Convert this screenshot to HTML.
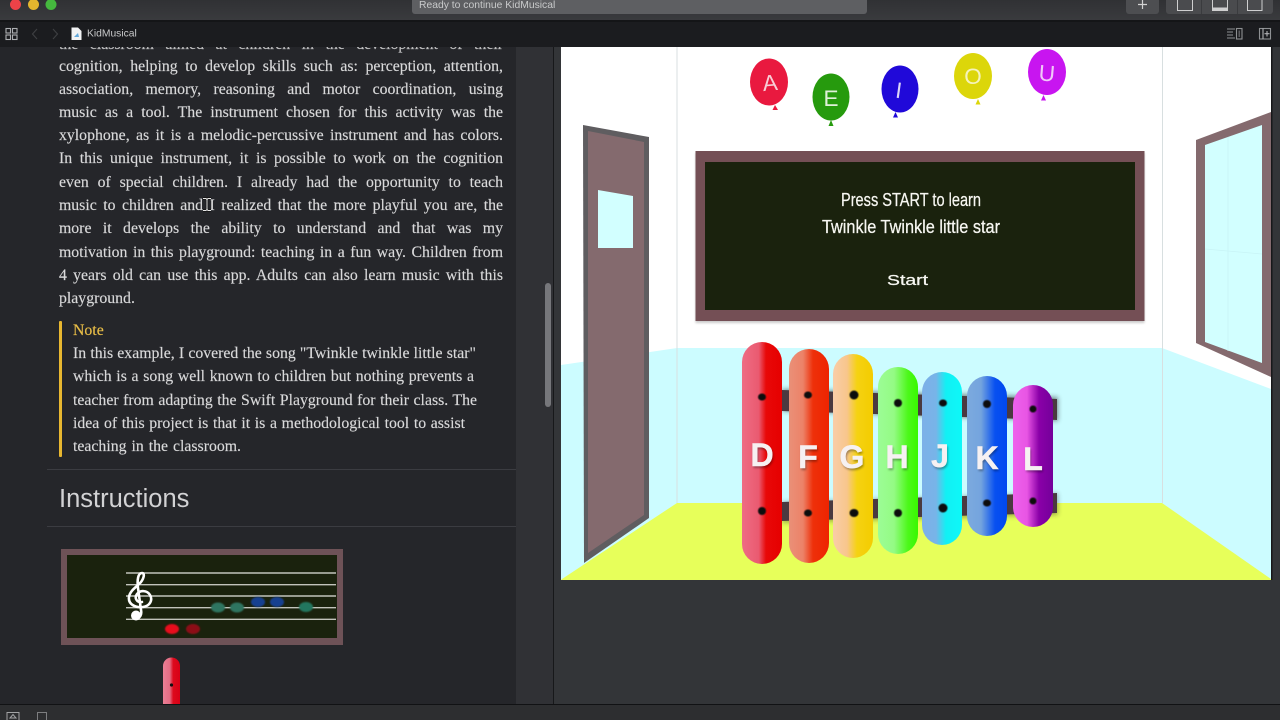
<!DOCTYPE html>
<html><head><meta charset="utf-8"><style>
html,body{margin:0;padding:0;width:1280px;height:720px;overflow:hidden;background:#25262a}
#clip{position:absolute;left:0;top:47px;width:516px;height:657px;overflow:hidden}
.l{position:absolute;font:15.8px/20px "Liberation Serif",serif;color:#d9d9da;-webkit-text-stroke:.15px #d9d9da;white-space:nowrap;text-align:justify;text-align-last:justify}
.w{left:59px;width:444px}
.n{left:73px}
.t{position:absolute;font-family:"Liberation Sans",sans-serif;white-space:nowrap}
svg{position:absolute;left:0;top:0}
</style></head><body>
<svg width="1280" height="720" viewBox="0 0 1280 720">
<defs>
<linearGradient id="tb" x1="0" y1="0" x2="0" y2="1"><stop offset="0" stop-color="#303134"/><stop offset="1" stop-color="#3a3b3e"/></linearGradient>
<linearGradient id="gD"><stop offset="0" stop-color="#ee6c84"/><stop offset=".42" stop-color="#ea5a70"/><stop offset=".6" stop-color="#e80808"/><stop offset="1" stop-color="#e60000"/></linearGradient>
<linearGradient id="gF"><stop offset="0" stop-color="#ea9078"/><stop offset=".35" stop-color="#ec8268"/><stop offset=".6" stop-color="#ee300a"/><stop offset="1" stop-color="#ee2400"/></linearGradient>
<linearGradient id="gG"><stop offset="0" stop-color="#f9cda8"/><stop offset=".35" stop-color="#f8c68c"/><stop offset=".6" stop-color="#f5d212"/><stop offset="1" stop-color="#f4cc00"/></linearGradient>
<linearGradient id="gH"><stop offset="0" stop-color="#9cfc96"/><stop offset=".4" stop-color="#94fb84"/><stop offset=".75" stop-color="#4cf81a"/><stop offset="1" stop-color="#38f800"/></linearGradient>
<linearGradient id="gJ"><stop offset="0" stop-color="#7cb0e8"/><stop offset=".35" stop-color="#78b4e8"/><stop offset=".6" stop-color="#12f0f4"/><stop offset="1" stop-color="#0ef8f8"/></linearGradient>
<linearGradient id="gK"><stop offset="0" stop-color="#7caade"/><stop offset=".35" stop-color="#74a4de"/><stop offset=".7" stop-color="#0850f0"/><stop offset="1" stop-color="#0048f0"/></linearGradient>
<linearGradient id="gL"><stop offset="0" stop-color="#ee62ec"/><stop offset=".35" stop-color="#e855e4"/><stop offset=".65" stop-color="#8a00a8"/><stop offset="1" stop-color="#74009a"/></linearGradient>
<linearGradient id="gS"><stop offset="0" stop-color="#ea7f95"/><stop offset=".4" stop-color="#e46c84"/><stop offset=".6" stop-color="#dd0a1c"/><stop offset="1" stop-color="#d80016"/></linearGradient>
<filter id="b2" x="-10%" y="-50%" width="120%" height="200%"><feGaussianBlur stdDeviation="2.5"/></filter>
<filter id="sh"><feGaussianBlur stdDeviation="1"/></filter>
<filter id="soft"><feGaussianBlur stdDeviation="0.5"/></filter>
<filter id="soft2" x="-20%" y="-20%" width="140%" height="140%"><feGaussianBlur stdDeviation="0.7"/></filter>
</defs>

<!-- chrome -->
<rect width="1280" height="21" fill="url(#tb)"/>
<rect y="20" width="1280" height="2" fill="#141517"/>
<rect y="22" width="1280" height="25" fill="#1b1c1f"/>
<circle cx="15.5" cy="4.5" r="5.5" fill="#ed4248"/>
<circle cx="33.5" cy="4.5" r="5.5" fill="#e3b52e"/>
<circle cx="51" cy="4.5" r="5.5" fill="#45b83e"/>
<rect x="412" y="-6" width="455" height="20" rx="3" fill="#5e5f62"/>
<rect x="1126" y="-6" width="33" height="20" rx="3" fill="#4d4e51"/>
<path d="M1142.5 0V9M1138 4.5H1147" stroke="#d2d2d2" stroke-width="1.2" fill="none"/>
<rect x="1166" y="-6" width="107" height="20" rx="3" fill="#4a4b4e"/>
<path d="M1201.5 0V14M1237.5 0V14" stroke="#3a3b3e"/>
<path d="M1177.500 0V10.500H1192.500V0M1212.500 0V10.500H1227.500V0M1247.500 0V10.500H1262V0" stroke="#cfcfd0" fill="none"/>
<rect x="1212.500" y="7.500" width="15" height="3" fill="#cfcfd0"/>

<!-- toolbar icons -->
<g stroke="#aeb0b3" fill="none" stroke-width="1.1">
<rect x="6" y="28.5" width="4.5" height="4.5"/><rect x="12.5" y="28.5" width="4.5" height="4.5"/>
<rect x="6" y="35" width="4.5" height="4.5"/><rect x="12.5" y="35" width="4.5" height="4.5"/>
</g>
<path d="M37 29L32.5 34L37 39" stroke="#3f4043" stroke-width="1.1" fill="none"/>
<path d="M53 29L57.5 34L53 39" stroke="#3f4043" stroke-width="1.1" fill="none"/>
<path d="M71.500 27.500H78L81.500 31V40H71.500Z" fill="#f2f3f4"/>
<path d="M74 37L78 33L79 37Z" fill="#62a9dc"/>
<g stroke="#8e9093" fill="none" stroke-width="1.100">
<path d="M1227 29H1235M1227 32H1233M1227 35H1233M1227 38H1235"/>
<rect x="1236.500" y="28.500" width="5.500" height="10.500"/>
<rect x="1238.500" y="30.500" width="1.500" height="6.500" fill="#5c5d60" stroke="none"/>
<rect x="1259.500" y="28.500" width="11" height="10.500"/>
<path d="M1263 28.500V39M1267 31V36.500M1264.500 33.700H1269.500" stroke="#b0b1b4"/>
</g>

<!-- editor -->
<rect x="0" y="47" width="516" height="657" fill="#25262a"/>
<rect x="516" y="47" width="37" height="657" fill="#303135"/>
<rect x="553" y="47" width="1" height="657" fill="#17181a"/>
<rect x="554" y="47" width="7" height="657" fill="#2f3034"/>
<rect x="545" y="283" width="6" height="124" rx="3" fill="#76777b"/>

<!-- live view -->
<rect x="554" y="580" width="726" height="124" fill="#333538"/>
<rect x="1271" y="47" width="9" height="657" fill="#333538"/>
<rect x="1271" y="47" width="1.500" height="533" fill="#17181a"/>
<rect x="554" y="47" width="7" height="533" fill="#333538"/>
<rect x="561" y="47" width="710" height="533" fill="#fff"/>
<polygon points="561,365 650,352 677,348 1162,348 1271,389 1271,580 561,580" fill="#ccfcff"/>
<polygon points="677,503 1162,503 1271,579 1271,580 561,580 562,579" fill="#e7ff5a"/>
<path d="M677 47V503M1162.500 47V503" stroke="#d8dfe0" stroke-width="1" fill="none"/>

<!-- door -->
<polygon points="583,125 649,137 649,518 584,563" fill="#5f5d60"/>
<polygon points="588,131 644,142 644,515 588,553" fill="#846a6e"/>
<polygon points="598,190 633,196 633,248 598,248" fill="#d2ffff"/>

<!-- window -->
<polygon points="1196,140 1271,112 1271,377 1196,343" fill="#846a6e"/>
<polygon points="1205,145 1262,125 1262,363 1205,342" fill="#d2ffff"/>
<path d="M1228 137V351M1205 249L1262 254" stroke="#c8f4f6" stroke-width=".8" fill="none"/>

<!-- blackboard -->
<rect x="695.500" y="153" width="449" height="170" fill="#999" opacity=".5" filter="url(#sh)"/>
<rect x="695.500" y="151" width="449" height="170" fill="#744f55"/>
<rect x="705" y="162" width="430" height="148" fill="#1a220d"/>
<g fill="#f7f7f2" stroke="#f7f7f2" stroke-width=".25" font-family="'Liberation Sans Narrow','Liberation Sans',sans-serif">
<text x="841" y="206" font-size="18.500" textLength="140" lengthAdjust="spacingAndGlyphs">Press START to learn</text>
<text x="822" y="233" font-size="18.500" textLength="178" lengthAdjust="spacingAndGlyphs">Twinkle Twinkle little star</text>
<text x="887" y="285" font-size="15" textLength="41" lengthAdjust="spacingAndGlyphs">Start</text>
</g>

<!-- balloons -->
<g font-family="'Liberation Sans',sans-serif" fill="#fff" text-anchor="middle" font-size="22.500">
<ellipse cx="769" cy="82" rx="19" ry="23.500" fill="#e9193f"/><path d="M775 105L772.500 110H778Z" fill="#e9193f"/>
<text x="770" y="90.500" transform="rotate(-5 770 82)" fill="#f8cdd6">A</text>
<ellipse cx="831" cy="97" rx="18.500" ry="23.500" fill="#269a0d"/><path d="M831 120L828.500 126H833.500Z" fill="#269a0d"/>
<text x="831" y="106" fill="#dff0d8">E</text>
<ellipse cx="900" cy="89" rx="18.500" ry="23.500" fill="#2009d9"/><path d="M895.500 112L893 117.500H898Z" fill="#2009d9"/>
<text x="899" y="98" transform="rotate(8 899 89)" fill="#dcd6f8">I</text>
<ellipse cx="973" cy="76" rx="19" ry="23" fill="#dcd60a"/><path d="M978 99L975.500 104.500H980.500Z" fill="#dcd60a"/>
<text x="973" y="84" fill="#f5f3bc">O</text>
<ellipse cx="1047" cy="72" rx="19" ry="23" fill="#c815f0"/><path d="M1043.500 95L1041 100.500H1046Z" fill="#c815f0"/>
<text x="1047" y="81" transform="rotate(5 1047 72)" fill="#f0c8f8">U</text>
</g>

<!-- xylophone supports -->
<polygon points="782,389 1058,397 1058,421 782,411" fill="#222" opacity=".5" filter="url(#b2)"/>
<polygon points="782,502 1058,493 1058,515 782,523" fill="#222" opacity=".35" filter="url(#b2)"/>
<polygon points="782,390 1057,399 1057,420 782,411" fill="#4a3940"/>
<polygon points="782,502 1057,493 1057,513 782,521" fill="#4a3940"/>
<!-- bars -->
<rect x="742" y="342" width="40" height="222" rx="20" fill="url(#gD)"/>
<rect x="789" y="349" width="40" height="214" rx="20" fill="url(#gF)"/>
<rect x="833" y="354" width="40" height="204" rx="20" fill="url(#gG)"/>
<rect x="878" y="367" width="40" height="187" rx="20" fill="url(#gH)"/>
<rect x="922" y="372" width="40" height="173" rx="20" fill="url(#gJ)"/>
<rect x="967" y="376" width="40" height="160" rx="20" fill="url(#gK)"/>
<rect x="1013" y="385" width="40" height="142" rx="20" fill="url(#gL)"/>
<g fill="#0c0c0c" filter="url(#soft)">
<ellipse cx="762" cy="397" rx="4" ry="3.500"/><ellipse cx="762" cy="511" rx="4" ry="4"/>
<ellipse cx="808" cy="395" rx="4" ry="3.500"/><ellipse cx="808" cy="513" rx="4" ry="3.500"/>
<ellipse cx="854" cy="395" rx="4.500" ry="4.500"/><ellipse cx="854" cy="513" rx="4.500" ry="4"/>
<ellipse cx="898" cy="403" rx="4" ry="4"/><ellipse cx="898" cy="513" rx="4" ry="4"/>
<ellipse cx="943" cy="403" rx="4" ry="3.500"/><ellipse cx="943" cy="508" rx="4.500" ry="4.500"/>
<ellipse cx="987" cy="404" rx="4" ry="4"/><ellipse cx="987" cy="503" rx="4" ry="3.500"/>
<ellipse cx="1033" cy="409" rx="3.500" ry="3.500"/><ellipse cx="1033" cy="501" rx="3.500" ry="3.500"/>
</g>
<g font-family="'Liberation Sans',sans-serif" font-weight="700" text-anchor="middle" font-size="32" fill="#000" opacity=".35" filter="url(#sh)">
<text x="763" y="468">D</text><text x="809" y="470">F</text><text x="853" y="470">G</text><text x="898" y="470">H</text><text x="941" y="469">J</text><text x="988" y="471">K</text><text x="1034" y="472">L</text>
</g>
<g font-family="'Liberation Sans',sans-serif" font-weight="700" text-anchor="middle" font-size="32" fill="#f6f1f2" stroke="#f6f1f2" stroke-width=".5">
<text x="762" y="466">D</text><text x="808" y="468">F</text><text x="852" y="468">G</text><text x="897" y="468">H</text><text x="940" y="467">J</text><text x="987" y="469">K</text><text x="1033" y="470">L</text>
</g>

<!-- dividers -->
<rect x="47" y="469" width="469" height="1" fill="#3b3c41"/>
<rect x="47" y="526" width="469" height="1" fill="#3b3c41"/>
<rect x="59" y="321" width="3" height="136" rx="1" fill="#e8b730"/>

<!-- thumbnail -->
<rect x="61" y="549" width="282" height="96" fill="#6e5257"/>
<rect x="67" y="555" width="270" height="83" fill="#1a220d"/>
<path d="M126 573H336M126 584.700H336M126 596H336M126 607.700H336M126 619.300H336" stroke="#c2c4bc" stroke-width="1.400" fill="none"/>
<path d="M142 602C137 603 134 598 137 594C140 590 147 590 150 595C153 600 150 606 143 607C135 608 128 604 129 597C130 590 138 586 141 582C144 578 145 573 142 573C138 573 137 580 138 588L141 610C142 615 140 618 136 618" fill="none" stroke="#fff" stroke-width="2.600" stroke-linecap="round" stroke-linejoin="round"/>
<circle cx="136" cy="615.500" r="5" fill="#fff"/>
<g filter="url(#soft2)">
<ellipse cx="172" cy="629" rx="7" ry="5" fill="#e8081e"/>
<ellipse cx="193" cy="629" rx="7" ry="5" fill="#8c1014"/>
<ellipse cx="218" cy="607.500" rx="7" ry="5" fill="#2f7460"/>
<ellipse cx="237" cy="607.500" rx="7" ry="5" fill="#2f7460"/>
<ellipse cx="258" cy="602" rx="7" ry="5" fill="#143f90"/>
<ellipse cx="277" cy="602" rx="7" ry="5" fill="#143f90"/>
<ellipse cx="306" cy="607" rx="7" ry="5" fill="#24765e"/>
</g>
<path d="M163 704V666A8.500 8.500 0 0 1 180 666V704Z" fill="url(#gS)"/>
<circle cx="171.500" cy="685" r="1.600" fill="#111"/>

<!-- bottom bar -->
<rect y="704" width="1280" height="16" fill="#2d2e30"/>
<rect y="704" width="1280" height="1" fill="#111214"/>
<rect x="7" y="712.500" width="12" height="12" fill="none" stroke="#a2a3a5"/>
<path d="M10 718L13 714.500L16 718Z" fill="none" stroke="#a2a3a5"/>
<rect x="37.500" y="712.500" width="9" height="12" fill="none" stroke="#7d7e80"/>
</svg>

<div class="t" style="left:419px;top:-1px;font-size:10.350px;line-height:14px;color:#c9cacb">Ready to continue KidMusical</div>
<div class="t" style="left:87px;top:27px;font-size:10.300px;line-height:14px;color:#c8c9ca;transform:translateY(.5px)">KidMusical</div>

<div id="clip">
<div class="l w" style="top:-12px;color:#b9b9ba">the classroom aimed at children in the development of their</div>
<div class="l w" style="top:9px;transform:translateY(1px)">cognition, helping to develop skills such as: perception, attention,</div>
<div class="l w" style="top:33px">association, memory, reasoning and motor coordination, using</div>
<div class="l w" style="top:56px">music as a tool. The instrument chosen for this activity was the</div>
<div class="l w" style="top:79px">xylophone, as it is a melodic-percussive instrument and has colors.</div>
<div class="l w" style="top:102px">In this unique instrument, it is possible to work on the cognition</div>
<div class="l w" style="top:126px">even of special children. I already had the opportunity to teach</div>
<div class="l w" style="top:149px">music to children and I realized that the more playful you are, the</div>
<div class="l w" style="top:172px">more it develops the ability to understand and that was my</div>
<div class="l w" style="top:196px">motivation in this playground: teaching in a fun way. Children from</div>
<div class="l w" style="top:219px">4 years old can use this app. Adults can also learn music with this</div>
<div class="l" style="left:59px;top:242px;width:76px">playground.</div>
<div class="l n" style="top:274px;width:32px;color:#e8bd47;-webkit-text-stroke:.15px #e8bd47">Note</div>
<div class="l n" style="top:297px;width:403px">In this example, I covered the song "Twinkle twinkle little star"</div>
<div class="l n" style="top:320px;width:401px">which is a song well known to children but nothing prevents a</div>
<div class="l n" style="top:344px;width:404px">teacher from adapting the Swift Playground for their class. The</div>
<div class="l n" style="top:367px;width:392px">idea of this project is that it is a methodological tool to assist</div>
<div class="l n" style="top:390px;width:168px">teaching in the classroom.</div>
</div>
<div class="t" style="left:59px;top:484px;font-size:25.500px;line-height:30px;color:#d2d2d4">Instructions</div>

<svg width="1280" height="720" viewBox="0 0 1280 720" style="pointer-events:none">
<path d="M203 198.500H206L207 199.500L208 198.500H211M207 199.500V209.500M203 210.500H206L207 209.500L208 210.500H211" stroke="#111" stroke-width="2.500" fill="none"/>
<path d="M203 198.500H206L207 199.500L208 198.500H211M207 199.500V209.500M203 210.500H206L207 209.500L208 210.500H211" stroke="#e8e8e8" stroke-width="1" fill="none"/>
</svg>
</body></html>
